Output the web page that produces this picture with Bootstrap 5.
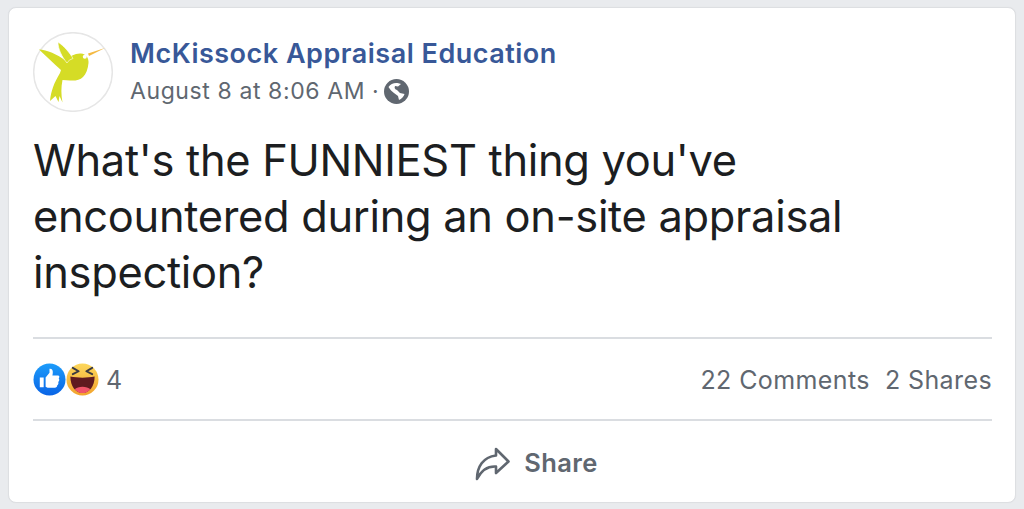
<!DOCTYPE html>
<html lang="en">
<head>
<meta charset="utf-8">
<title>Post</title>
<link href="https://cdn.jsdelivr.net/npm/bootstrap@5.3.0/dist/css/bootstrap.min.css" rel="stylesheet">
<style>
html,body{height:509px;overflow:hidden}
body{background:#e9ebee;font-family:Inter,"Liberation Sans",sans-serif;padding:7px 8px 6px}
.post-box{height:496px;background:#fff;border:1px solid #dddfe2;border-radius:8px;padding:0 23px 0 24px;box-shadow:0 0 1px #dddfe2}
.post-head{padding-top:24px;height:104px}
.avatar{width:80px;height:80px;flex:none;margin-right:17px}
.page-name{font-size:27px;line-height:32px;font-weight:600;color:#385898;letter-spacing:.5px;margin-top:6px}
.post-meta{font-size:23px;line-height:32px;color:#606770;letter-spacing:.6px;margin-top:5px}
.globe{margin-left:5px}
.post-text{font-size:43.4px;line-height:56px;color:#1c1e21;margin:20px 0 0;letter-spacing:-.3px}
.stats{height:84px;border-top:2px solid #dadde1;border-bottom:2px solid #dadde1;margin-top:37px;font-size:25px;letter-spacing:.4px;color:#606770}
.emoji{width:33px;height:33px;flex:none}
.count{margin-left:7px}
.stat-text{padding-top:4px}
.stat-links{gap:15px}
.share-row{height:80px;font-size:25.5px;font-weight:600;color:#606770;letter-spacing:.4px;padding:5px 0 0 48px}
.share-icon{margin-right:14px}
</style>
</head>
<body>
<div class="post-box">
  <div class="post-head d-flex">
    <svg class="avatar" viewBox="33 31 80 80" aria-hidden="true">
      <circle cx="73" cy="71" r="39.3" fill="#fff" stroke="#e6e6e6" stroke-width="1.5"/>
      <path d="M88 52.5 L105 47 L89 55 Z" fill="#f4b942"/>
      <path d="M39 48.5 C47 49 57 53 66 60 C69 55 76 52 81 52.500 C86 53 89 57 88.500 62 C88 68 86 73 83 76 C80 79 75 80 70 79.500 L62.500 79 C61 86 61 94 62.500 101.500 L59.500 95 L58.500 101 L55.500 95 L50 100 C51 90 54 82 60 72 L61 69 C53 62 46 55 39 48.500 Z" fill="#d5dc26"/>
      <path d="M58 41 C64 45 70 52 73 57.500 C70 58.500 68 60 67 62 C62 56 58 48 58 41 Z" fill="#d5dc26" stroke="#fff" stroke-width=".6"/>
      <circle cx="84.800" cy="55.800" r="2" fill="#fff"/>
    </svg>
    <div>
      <div class="page-name">McKissock Appraisal Education</div>
      <div class="post-meta d-flex align-items-center">August 8 at 8:06 AM ·
        <svg class="globe" width="25" height="25" viewBox="0 0 25 25" aria-hidden="true">
          <circle cx="12.500" cy="12.500" r="12.500" fill="#606770"/>
          <path d="M4.500 8 C6.500 5 10 3.500 13.500 4 L17 5 L14 7.500 L11 7 C10 9 11 10.500 13 11 L16 14 L20.500 15 C20 17.500 17.500 20 15 21 L14 17 L10 14 C8 12.500 6 10.500 4.500 8 Z" fill="#fff"/>
        </svg>
      </div>
    </div>
  </div>
  <p class="post-text">What's the FUNNIEST thing you've<br>encountered during an on-site appraisal<br>inspection?</p>
  <div class="stats d-flex align-items-center justify-content-between">
    <div class="d-flex align-items-center">
      <svg class="emoji" viewBox="0 0 34 34" aria-hidden="true">
        <defs><linearGradient id="lk" x1="0" y1="0" x2="0" y2="1"><stop offset="0" stop-color="#1c9cfa"/><stop offset="1" stop-color="#0a64e6"/></linearGradient></defs>
        <circle cx="17" cy="17" r="16.500" fill="url(#lk)"/>
        <path d="M7 15 H11 V25 H7 Z M13 15 L17 10 V6 C20.500 5.500 21 9 20 13 H26 C27.500 13.500 27.500 15 26.500 16 C27.500 17 27 19 26 19.500 C26.500 21 26 22.500 25 23 C25 24.500 24 25.500 22.500 25.500 H15 L13 24.500 Z" fill="#fff"/>
      </svg>
      <svg class="emoji" viewBox="0 0 34 34" aria-hidden="true">
        <defs><linearGradient id="ha" x1="0" y1="0" x2="0" y2="1"><stop offset="0" stop-color="#fcd75c"/><stop offset="1" stop-color="#f2a32d"/></linearGradient></defs>
        <circle cx="17" cy="17" r="16.500" fill="url(#ha)"/>
        <path d="M7 5 L13 8.500 L7 11.500 M27 5 L21 8.500 L27 11.500" fill="none" stroke="#3a3a42" stroke-width="2" stroke-linecap="round" stroke-linejoin="round"/>
        <path d="M4.500 14 C12 15.500 22 15.500 29.500 14 C29.500 24 24 31 17 31 C10 31 4.500 24 4.500 14 Z" fill="#5f1a1f"/>
        <path d="M9 27 C12 23.500 22 23.500 25 27 C22.500 30 20 31 17 31 C14 31 11.500 30 9 27 Z" fill="#f0556a"/>
      </svg>
      <span class="count stat-text">4</span>
    </div>
    <div class="d-flex stat-links stat-text"><span>22 Comments</span><span>2 Shares</span></div>
  </div>
  <div class="share-row d-flex align-items-center justify-content-center">
    <svg class="share-icon" width="35" height="34" viewBox="0 0 35 34" aria-hidden="true">
      <path d="M21 2 L33.500 14.500 L21 26 V19.500 C13 19 6.500 23 2 32 C2 20 8 10 21 8.500 Z" fill="none" stroke="#606770" stroke-width="2.600" stroke-linejoin="round"/>
    </svg>
    <span>Share</span>
  </div>
</div>
</body>
</html>
